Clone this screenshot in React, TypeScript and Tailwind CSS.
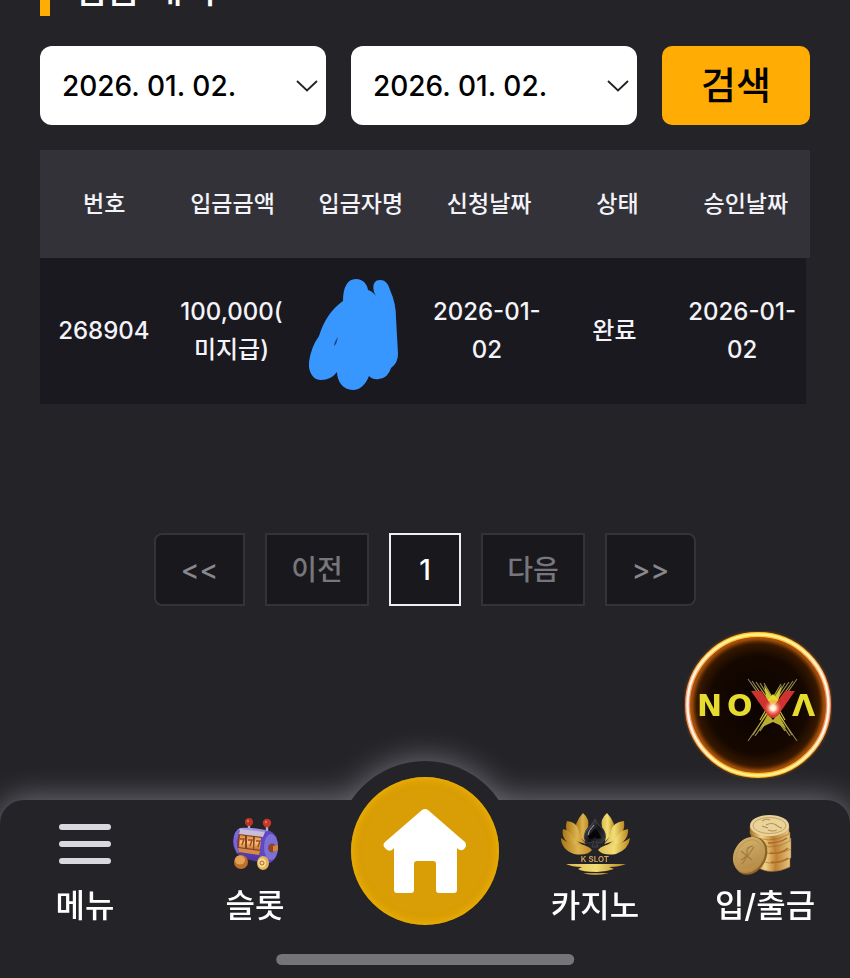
import type { ReactNode } from 'react'

const columns = ['번호', '입금금액', '입금자명', '신청날짜', '상태', '승인날짜']

const pages = [
  { label: '<<', name: '처음 페이지', className: 'w-[91px] rounded-l-lg border-[#343338] text-[#88878c]' },
  { label: '이전', name: '이전 페이지', className: 'w-[104px] border-[#343338] text-[#77767b]' },
  { label: '1', name: '1 페이지', className: 'w-[72px] border-[#eeeef4] text-white' },
  { label: '다음', name: '다음 페이지', className: 'w-[104px] border-[#343338] text-[#77767b]' },
  { label: '>>', name: '마지막 페이지', className: 'w-[91px] rounded-r-lg border-[#343338] text-[#88878c]' },
]

function DateSelect({ label }: { label: string }) {
  return (
    <div className="relative flex-1">
      <select
        aria-label={label}
        className="w-full h-[79px] appearance-none rounded-xl bg-white pl-[22px] pr-14 text-[28px] font-medium text-black"
      >
        <option>2026. 01. 02.</option>
      </select>
      <svg viewBox="0 0 22 12" className="pointer-events-none absolute right-2 top-[34px] h-3 w-[22px]" fill="none" stroke="#222" strokeWidth="1.8">
        <path d="M1 1 11 10.5 21 1" />
      </svg>
    </div>
  )
}

// 입금자명 가림 표시
function NameMask() {
  return (
    <svg viewBox="309 279 90 111" className="mx-auto h-[111px] w-[90px]">
      <path
        d="M343 301C343 288 347 279 356 279C363 279 367 284 368 290Q372 291 376 296C372 290 372 280 380 280C385 280 388 283 390 290Q396 303 396 318L398 354Q398 363 391 368Q388 378 379 379Q373 380 369 376C365 386 359 390 353 390C343 390 337 381 337 372Q331 380 321 380C312 380 308 370 309 362Q311 347 319 336Q326 313 343 301Z"
        fill="#3897ff"
      />
      <path d="M338 337 336 344 334 346Q335 340 338 337Z" fill="#1c416e" />
    </svg>
  )
}

function MenuIcon() {
  return (
    <svg viewBox="0 0 52 42" className="h-[42px] w-[52px]" fill="#d9d8de">
      <rect width="52" height="6" y="1" rx="3" />
      <rect width="52" height="6" y="18" rx="3" />
      <rect width="52" height="6" y="35" rx="3" />
    </svg>
  )
}

function SlotIcon() {
  return (
    <svg viewBox="231 815 50 56" className="h-14 w-[50px]">
      <defs>
        <linearGradient id="drum" x2="0" y2="1">
          <stop stopColor="#a9a0ec" />
          <stop offset=".35" stopColor="#6b4fd0" />
          <stop offset="1" stopColor="#4b2f96" />
        </linearGradient>
        <linearGradient id="reel" x2="0" y2="1">
          <stop stopColor="#d98a3c" />
          <stop offset=".5" stopColor="#f7c46c" />
          <stop offset="1" stopColor="#bd6b2b" />
        </linearGradient>
      </defs>
      <path d="M250 824v7M268 825v10" stroke="#b3aeb8" strokeWidth="2.4" />
      <circle cx="250" cy="821" r="4" fill="#bd3425" />
      <circle cx="268" cy="822" r="4.2" fill="#c73828" />
      <circle cx="249" cy="820" r="1.2" fill="#e0705c" />
      <circle cx="267" cy="821" r="1.2" fill="#e0705c" />
      <path d="M241 827Q253 826 270 830Q279 833 279 846Q278 859 267 863L243 857Q234 850 234 840Q235 830 241 827Z" fill="url(#drum)" />
      <ellipse cx="269" cy="846" rx="10" ry="16" fill="#5f48c4" />
      <ellipse cx="272" cy="846" rx="7" ry="13" fill="#7c70d4" />
      <ellipse cx="273" cy="847" rx="4" ry="4.5" fill="#8c4532" />
      <path d="M274 845 279 844v5l-5 2Z" fill="#d98436" />
      <path d="M241 829 264 832Q260 840 261 853L239 850Q237 837 241 829Z" fill="#83402a" />
      <path d="M241 828 266 831 264 836 240 833Z" fill="#c9bed6" />
      <path d="m241 834 5 1v12l-6-1Zm7 1 6 1v12l-6-1Zm8 1 6 1-1 12-6-1Z" fill="url(#reel)" />
      <path d="m241 838 4 0-2 6m6-5 4 0-2 6m6-5 4 0-2 6" fill="none" stroke="#a7452c" strokeWidth="1.5" />
      <path d="m239 847 22 3-1 4-20-3Z" fill="#d58a48" />
      <path d="M240 829Q233 840 239 852" fill="none" stroke="#7b66dc" strokeWidth="2.5" />
      <ellipse cx="242" cy="861" rx="7" ry="7" fill="#bd702b" />
      <ellipse cx="241" cy="859" rx="5" ry="4.5" fill="#e3a153" />
      <ellipse cx="264" cy="862" rx="6" ry="7" fill="#e8b05a" />
      <ellipse cx="263" cy="862" rx="4" ry="4.7" fill="#f8dc91" />
      <circle cx="263" cy="862" r="2" fill="none" stroke="#a8682b" />
    </svg>
  )
}

function CasinoIcon() {
  return (
    <svg viewBox="560 812 71 64" className="h-16 w-[71px]">
      <defs>
        <linearGradient id="leaf" x2="1">
          <stop stopColor="#a97516" />
          <stop offset=".55" stopColor="#dcb44f" />
          <stop offset="1" stopColor="#c28b24" />
        </linearGradient>
        <linearGradient id="leafBright" x2="1">
          <stop stopColor="#dfba50" />
          <stop offset=".5" stopColor="#f0df75" />
          <stop offset="1" stopColor="#bd861f" />
        </linearGradient>
        <linearGradient id="spade" x2="1" y2="1">
          <stop stopColor="#66666c" />
          <stop offset=".5" stopColor="#141417" />
          <stop offset="1" stopColor="#46464b" />
        </linearGradient>
      </defs>
      <g fill="url(#leaf)">
        <path d="M583 813Q590 819 588 827Q583 834 585 842Q574 832 576 824Q579 817 583 813Z" />
        <path d="M567 821Q577 822 579 831Q580 838 586 844Q571 841 567 832Q565 826 567 821Z" />
        <path d="M563 829Q571 831 574 838Q578 843 586 846Q576 848 567 842Q561 836 563 829Z" />
        <path d="M561 838Q570 845 579 845Q588 845 592 850Q587 856 574 854Q561 849 561 838Z" />
      </g>
      <g fill="url(#leafBright)">
        <path d="M607 813Q600 819 602 827Q607 834 605 842Q615 832 614 824Q611 817 607 813Z" />
        <path d="M624 821Q613 822 611 831Q610 838 604 844Q619 841 623 832Q625 826 624 821Z" />
        <path d="M628 829Q619 831 616 838Q612 843 604 846Q614 848 623 842Q629 836 628 829Z" />
        <path d="M630 838Q620 845 611 845Q602 845 598 850Q603 856 616 854Q629 849 630 838Z" />
      </g>
      <path d="M595 819Q597 825 603 829Q609 838 601 843Q597 843 596 841L598 847H592L594 841Q588 846 584 838Q584 830 591 825Q594 822 595 819Z" fill="url(#spade)" stroke="#505056" strokeWidth=".6" />
      <path d="M594 825Q588 831 588 835" fill="none" stroke="#a4a4aa" />
      <path d="M595 829Q600 833 601 838Q597 840 595 837Q591 841 588 837Q591 833 595 829Z" fill="#050507" />
      <text x="595" y="862" textAnchor="middle" fontSize="8" fontWeight="600" fill="#d7a457" fontFamily="Inter, sans-serif">K SLOT</text>
      <path d="M566 864H626Q619 867 609 867L614 869Q605 872 597 872Q582 872 578 869L582 867Q572 867 566 864Z" fill="url(#leafBright)" />
      <path d="M583 873H609Q602 875 595 875Q588 875 583 873Z" fill="#c09237" />
    </svg>
  )
}

function CoinsIcon() {
  return (
    <svg viewBox="735 813 60 62" className="h-[62px] w-[60px] overflow-visible">
      <defs>
        <linearGradient id="coinEdge" x2="1">
          <stop stopColor="#a9752c" />
          <stop offset=".3" stopColor="#f1d488" />
          <stop offset=".6" stopColor="#be8133" />
          <stop offset="1" stopColor="#e6c680" />
        </linearGradient>
        <linearGradient id="coinFace" x2="1" y2="1">
          <stop stopColor="#d8b873" />
          <stop offset="1" stopColor="#ad803c" />
        </linearGradient>
      </defs>
      <g fill="url(#coinEdge)" stroke="#8b6028" strokeWidth=".5">
        <path d="M754 857V865Q769 877 790 867V857Z" />
        <path d="M754 848V857Q770 869 791 858V848Z" />
        <path d="M752 840V848Q771 859 791 849V838Z" />
        <path d="M751 834V841Q769 853 790 841V832Z" />
        <path d="M750 826V834Q768 846 789 834V826Z" />
      </g>
      <path d="M768 843q12 0 19-5m-17 15q11 1 18-5m-17 14q10 1 17-4" stroke="#b0692a" strokeWidth="1.5" fill="none" />
      <ellipse cx="769.5" cy="825.5" rx="19.5" ry="10.5" fill="#ead39a" />
      <ellipse cx="769.5" cy="825.5" rx="16.5" ry="8" fill="none" stroke="#b79655" strokeWidth=".8" />
      <path d="M762 821q4-3 8-1m-4 5q6-3 10 0t6 3m-20-2 6 2m0 2q5 2 9 0" fill="none" stroke="#b09050" strokeWidth="1.1" />
      <ellipse cx="751" cy="856" rx="15" ry="20" transform="rotate(30 751 856)" fill="#8e6329" />
      <ellipse cx="749" cy="855" rx="15" ry="19" transform="rotate(30 749 855)" fill="url(#coinFace)" />
      <ellipse cx="749" cy="855" rx="12" ry="16" transform="rotate(30 749 855)" fill="none" stroke="#bd9757" />
      <path d="M753 846q-7 1-6 6t-6 8m0-9 11 9m2-13-12 17" fill="none" stroke="#a17b40" strokeWidth="1.2" />
    </svg>
  )
}

function NovaLogo() {
  return (
    <svg viewBox="684 631 148 148" className="h-full w-full">
      <defs>
        <radialGradient id="novaDisc">
          <stop stopColor="#0b0200" />
          <stop offset=".7" stopColor="#150800" />
          <stop offset=".87" stopColor="#351700" />
          <stop offset="1" stopColor="#9a5005" />
        </radialGradient>
        <linearGradient id="novaRing" x2="0" y2="1">
          <stop stopColor="#ffc829" />
          <stop offset=".25" stopColor="#ffb062" />
          <stop offset=".5" stopColor="#f08a68" />
          <stop offset=".75" stopColor="#ffaa55" />
          <stop offset="1" stopColor="#ffc21f" />
        </linearGradient>
        <linearGradient id="novaCore" x2="0" y2="1">
          <stop stopColor="#fff08a" />
          <stop offset=".3" stopColor="#fff5e0" />
          <stop offset=".7" stopColor="#fff5ee" />
          <stop offset="1" stopColor="#fff08a" />
        </linearGradient>
        <linearGradient id="rays" x1="0" y1="679" x2="0" y2="741" gradientUnits="userSpaceOnUse">
          <stop stopColor="#77705b" />
          <stop offset=".35" stopColor="#cfc23a" />
          <stop offset=".65" stopColor="#cfc23a" />
          <stop offset="1" stopColor="#77705b" />
        </linearGradient>
        <radialGradient id="flare">
          <stop stopColor="#fff" />
          <stop offset=".3" stopColor="#ffe9c8" />
          <stop offset="1" stopColor="#ff4320" stopOpacity="0" />
        </radialGradient>
        <filter id="soft" x="-10%" y="-10%" width="120%" height="120%">
          <feGaussianBlur stdDeviation="1.5" />
        </filter>
      </defs>
      <circle cx="758" cy="705" r="70" fill="url(#novaDisc)" />
      <circle cx="758" cy="705" r="69" fill="none" stroke="#a95010" strokeWidth="8" filter="url(#soft)" />
      <circle cx="758" cy="705" r="70.5" fill="none" stroke="url(#novaRing)" strokeWidth="5" />
      <circle cx="758" cy="705" r="70.5" fill="none" stroke="url(#novaCore)" strokeWidth="2.4" />
      {/* X 모양 광선 */}
      <path
        d="M748 679 785 731M752 681 790 736M756 682 797 741M760 683 792 735M764 683 785 720M797 679 760 731M793 681 755 736M789 682 748 741M785 683 753 735M781 684 760 720"
        stroke="url(#rays)"
        strokeWidth="1.2"
      />
      <path d="M764 685 773 699 782 685 777 706H768Z" fill="#d3c634" />
      <path d="M768 714 773 720 778 714 786 728 773 722 760 728Z" fill="#b9ad32" />
      <path d="M751 691H761L773 707 785 691H795L779 714Q773 722 767 714Z" fill="#cf3230" />
      <path d="M768 700 773 694 778 700 773 707Z" fill="#e6dc2f" />
      <g fontFamily="'DejaVu Sans', sans-serif" fontSize="30" fontWeight="700" fill="#e6dc2f">
        <text x="697" y="716">N</text>
        <text x="727" y="716">O</text>
        <text x="792" y="716">Λ</text>
      </g>
      <circle cx="773" cy="708" r="9" fill="url(#flare)" />
    </svg>
  )
}

function NavItem({ label, children }: { label: string; children: ReactNode }) {
  return (
    <a href="#" className="flex flex-col items-center pt-3 text-white">
      <span className="flex h-16 items-center">{children}</span>
      <span className="mt-1.5 text-[32px] leading-[48px] font-medium whitespace-nowrap">{label}</span>
    </a>
  )
}

export default function App() {
  return (
    <div className="min-h-screen bg-[#242428] pb-[200px] text-[#f4f3f8] font-['Inter','Noto_Sans_CJK_KR',sans-serif]">
      {/* 제목 */}
      <header className="flex h-4 items-end overflow-hidden px-10">
        <h1 className="border-l-[10px] border-[#ffad05] pl-6 text-[36px] leading-[52px] font-medium text-white">입금 내역</h1>
      </header>

      <main className="px-10 pt-[30px]">
        {/* 기간 검색 */}
        <form className="flex gap-[25px]" onSubmit={(e) => e.preventDefault()}>
          <DateSelect label="시작일" />
          <DateSelect label="종료일" />
          <button className="h-[79px] w-[148px] rounded-[10px] bg-[#ffad05] text-[38px] font-medium text-black">검색</button>
        </form>

        {/* 입금 내역 */}
        <table className="mt-[25px] block w-full text-center">
          <thead className="block bg-[#333238]">
            <tr className="table h-[108px] w-full table-fixed">
              {columns.map((c) => (
                <th key={c} scope="col" className="text-[23px] font-medium">{c}</th>
              ))}
            </tr>
          </thead>
          <tbody className="block pr-1 text-[24px] leading-[38px] font-medium">
            <tr className="table h-[146px] w-full table-fixed bg-[#1a1920]">
              <td>268904</td>
              <td>100,000(<br />미지급)</td>
              <td className="pt-1.5 pr-2.5"><NameMask /></td>
              <td>2026-01-<br />02</td>
              <td>완료</td>
              <td>2026-01-<br />02</td>
            </tr>
          </tbody>
        </table>

        {/* 페이지 이동 */}
        <div className="mt-[129px] flex justify-center gap-5">
          {pages.map((p) => (
            <button key={p.label} aria-label={p.name} className={`h-[73px] border-2 bg-[#19181d] text-[28px] font-medium ${p.className}`}>
              {p.label}
            </button>
          ))}
        </div>
      </main>

      <button aria-label="NOVA" className="fixed right-[18px] bottom-[199px] z-10 size-[148px] rounded-full">
        <NovaLogo />
      </button>

      {/* 하단 메뉴 */}
      <nav className="fixed inset-x-0 bottom-0 h-[178px]">
        <div className="absolute inset-0 drop-shadow-[0_0_16px_rgba(225,222,240,0.44)]">
          <div className="absolute -top-[39px] left-1/2 size-[178px] -translate-x-1/2 rounded-full bg-[#242428]" />
          <div className="h-full rounded-t-[24px] bg-[#242428]" />
        </div>
        <div className="relative grid grid-cols-5">
          <NavItem label="메뉴"><MenuIcon /></NavItem>
          <NavItem label="슬롯"><SlotIcon /></NavItem>
          <a
            href="#"
            aria-label="홈"
            className="-mt-[23px] flex size-[148px] items-center justify-center justify-self-center rounded-full bg-[#d99d05] shadow-[inset_0_0_10px_#f5b800]"
          >
            <svg viewBox="385 809 84 85" className="h-[85px] w-[84px]" fill="#fff">
              <path d="M424 810Q427 808 430 810L467 842Q469 845 467 848Q464 852 460 849L459 848V890Q459 893 456 893H441Q438 893 438 890V864Q438 861 435 861H419Q416 861 416 864V890Q416 893 413 893H399Q396 893 396 890V848L394 850Q390 852 387 848Q384 845 387 842Z" />
            </svg>
          </a>
          <NavItem label="카지노"><CasinoIcon /></NavItem>
          <NavItem label="입/출금"><CoinsIcon /></NavItem>
        </div>
        <div className="absolute bottom-[13px] left-1/2 h-[11px] w-[35%] -translate-x-1/2 rounded-full bg-[#757478]" />
      </nav>
    </div>
  )
}
